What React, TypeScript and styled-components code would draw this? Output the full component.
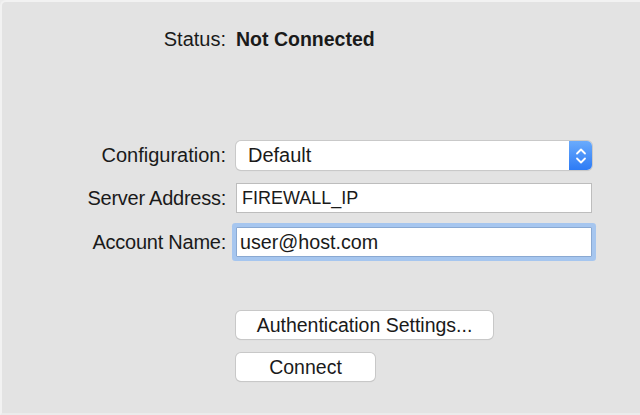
import React from 'react'
import styled, { createGlobalStyle } from 'styled-components'

const GlobalStyle = createGlobalStyle`
  html, body {
    margin: 0;
    padding: 0;
    background: #ececec;
  }
  body {
    font-family: "Liberation Sans", Arial, sans-serif;
    color: #1a1a1a;
  }
`

const Panel = styled.div`
  box-sizing: border-box;
  width: 640px;
  height: 415px;
  margin: 0;
  padding-top: 26px;
  background: #e3e3e3;
  border-top: 2px solid #f2f2f2;
  border-left: 2px solid #f2f2f2;
  border-bottom: 2px solid #ebebeb;
  border-top-left-radius: 6px;
  display: flex;
  flex-direction: column;
`

const Row = styled.div<{ $top?: number }>`
  display: grid;
  grid-template-columns: 224px 356px;
  column-gap: 10px;
  align-items: center;
  margin-top: ${({ $top }) => $top ?? 0}px;
`

const Label = styled.div<{ $tight?: boolean }>`
  text-align: right;
  font-size: 20px;
  letter-spacing: ${({ $tight }) => ($tight ? '-0.25px' : '0')};
  white-space: nowrap;
`

const Value = styled.div`
  font-size: 19.5px;
  font-weight: bold;
`

const Select = styled.div`
  box-sizing: border-box;
  height: 29px;
  display: flex;
  align-items: stretch;
  background: #fff;
  border-radius: 5px;
  box-shadow: 0 0 0 1px #c9c9c9, 0 1px 1px rgba(0, 0, 0, 0.12);
  overflow: hidden;
`

const SelectText = styled.div`
  flex: 1;
  display: flex;
  align-items: center;
  padding-left: 12px;
  font-size: 20px;
`

const Stepper = styled.div`
  width: 23px;
  display: flex;
  align-items: center;
  justify-content: center;
  background: linear-gradient(#6aabfc, #2d7bf5);
`

const FieldWrap = styled.div<{ $focus?: boolean }>`
  box-sizing: border-box;
  height: 30px;
  background: #fff;
  border: 1px solid ${({ $focus }) => ($focus ? '#8aa9d2' : '#bdbdbd')};
  box-shadow: ${({ $focus }) => ($focus ? '0 0 0 4px #a6c6ef' : 'none')};
  border-radius: ${({ $focus }) => ($focus ? '1px' : '0')};
  display: flex;
  align-items: center;
  padding-left: ${({ $focus }) => ($focus ? '3px' : '5px')};
  font-size: ${({ $focus }) => ($focus ? '19.7px' : '18px')};
`

const Buttons = styled.div`
  display: flex;
  flex-direction: column;
  align-items: flex-start;
  gap: 14px;
  padding-left: 234px;
  margin-top: 54px;
`

const Button = styled.button<{ $w: number }>`
  box-sizing: border-box;
  width: ${({ $w }) => $w}px;
  height: 28px;
  background: #fff;
  border: none;
  border-radius: 5px;
  box-shadow: 0 0 0 1px #c8c8c8, 0 1px 1px rgba(0, 0, 0, 0.15);
  font-family: "Liberation Sans", Arial, sans-serif;
  font-size: 19.5px;
  color: #1a1a1a;
  padding: 0;
`

const Chevrons = () => (
  <svg width="12" height="18" viewBox="0 0 12 18" fill="none" stroke="#fff" strokeWidth="1.8" strokeLinecap="round" strokeLinejoin="round">
    <path d="M2 6.5 L6 2.5 L10 6.5" />
    <path d="M2 11.5 L6 15.5 L10 11.5" />
  </svg>
)

export default function App() {
  return (
    <>
      <GlobalStyle />
      <Panel>
        <Row>
          <Label>Status:</Label>
          <Value>Not Connected</Value>
        </Row>
        <Row $top={90}>
          <Label>Configuration:</Label>
          <Select>
            <SelectText>Default</SelectText>
            <Stepper>
              <Chevrons />
            </Stepper>
          </Select>
        </Row>
        <Row $top={13}>
          <Label $tight>Server Address:</Label>
          <FieldWrap>FIREWALL_IP</FieldWrap>
        </Row>
        <Row $top={14}>
          <Label $tight>Account Name:</Label>
          <FieldWrap $focus>user@host.com</FieldWrap>
        </Row>
        <Buttons>
          <Button $w={257}>Authentication Settings...</Button>
          <Button $w={139}>Connect</Button>
        </Buttons>
      </Panel>
    </>
  )
}
